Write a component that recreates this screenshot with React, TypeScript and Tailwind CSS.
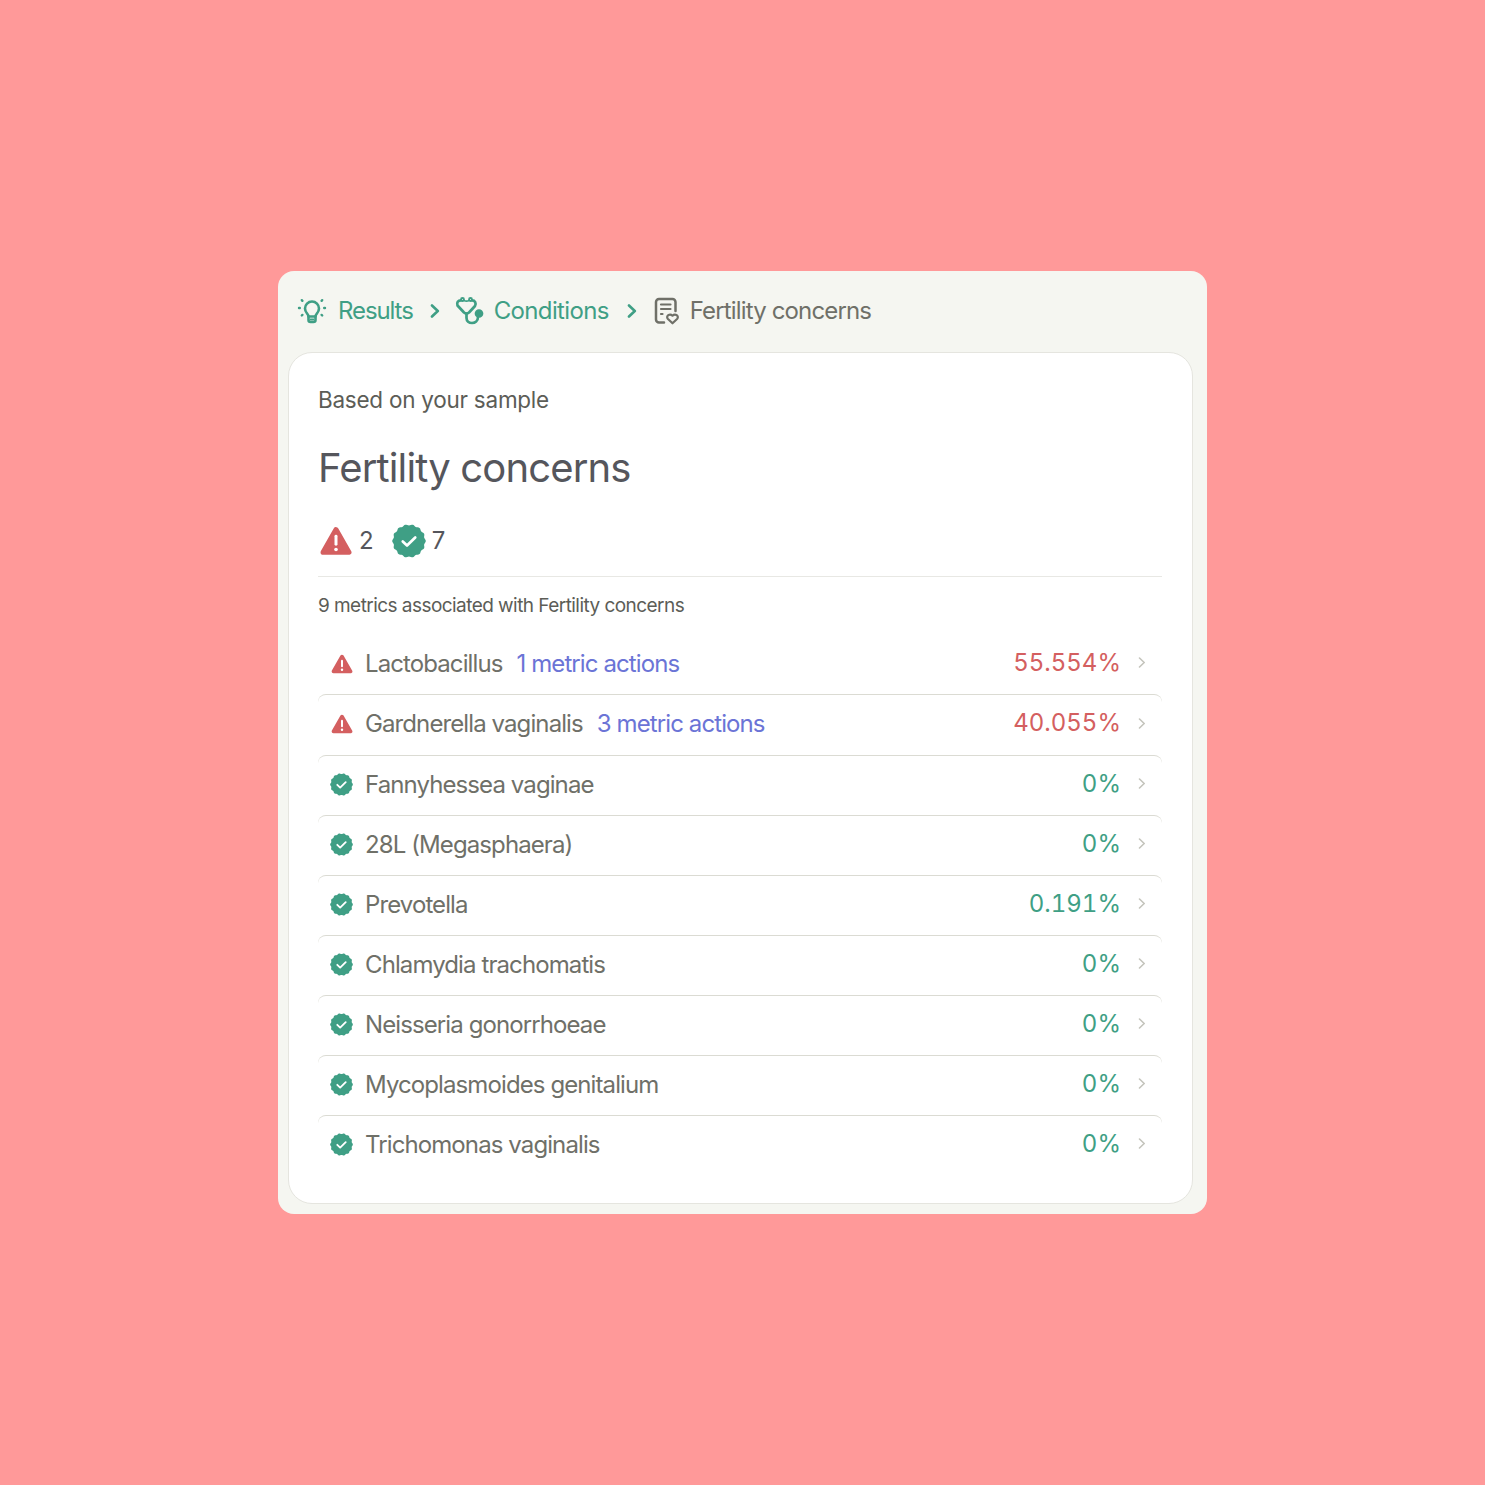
import React from "react";

const font = { fontFamily: 'Inter, "Liberation Sans", sans-serif' };

function scallopPath(cx: number, cy: number, r: number, n: number, amp: number) {
  const pts: string[] = [];
  const steps = n * 8;
  for (let i = 0; i < steps; i++) {
    const a = (i / steps) * Math.PI * 2;
    const rr = r + amp * Math.cos(a * n);
    pts.push(`${(cx + rr * Math.cos(a)).toFixed(2)} ${(cy + rr * Math.sin(a)).toFixed(2)}`);
  }
  return "M" + pts.join("L") + "Z";
}

function Check({ size }: { size: number }) {
  return (
    <svg width={size} height={size} viewBox="0 0 24 24" className="shrink-0">
      <path d={scallopPath(12, 12, 11.4, 14, 0.45)} fill="#3f9f85" />
      <path d="M7.6 12.3l3 2.9 5.8-5.7" fill="none" stroke="#fff" strokeWidth="1.9" strokeLinecap="round" strokeLinejoin="round" />
    </svg>
  );
}

function Warn({ w, h }: { w: number; h: number }) {
  return (
    <svg width={w} height={h} viewBox="0 0 30 28" className="shrink-0">
      <path d="M15 3.5L27 24.5H3L15 3.5Z" fill="#d45f60" stroke="#d45f60" strokeWidth="5" strokeLinejoin="round" />
      <path d="M15 9.5v7.5" stroke="#fff" strokeWidth="2.8" strokeLinecap="round" />
      <circle cx="15" cy="22" r="1.7" fill="#fff" />
    </svg>
  );
}

function BigChevron() {
  return (
    <svg width="10" height="14" viewBox="0 0 10 14" className="shrink-0">
      <path d="M2 1.5L7.8 7L2 12.5" fill="none" stroke="#3f9f85" strokeWidth="2.6" strokeLinecap="round" strokeLinejoin="round" />
    </svg>
  );
}

function SmallChevron() {
  return (
    <svg width="8" height="11" viewBox="0 0 8 11" className="shrink-0">
      <path d="M1.5 1L6.2 5.5L1.5 10" fill="none" stroke="#c4c4bc" strokeWidth="1.6" strokeLinecap="round" strokeLinejoin="round" />
    </svg>
  );
}

function Bulb() {
  return (
    <svg width="30" height="30" viewBox="0 0 30 30" fill="none" stroke="#3f9f85" strokeWidth="2.6" strokeLinecap="round" strokeLinejoin="round" className="shrink-0">
      <path d="M11.5 20.5c0-2.5-3.5-3.8-3.5-8a7 7 0 0 1 14 0c0 4.2-3.5 5.5-3.5 8z" />
      <path d="M11.5 20.5v3.5a2 2 0 0 0 2 2h3a2 2 0 0 0 2-2v-3.5" />
      <path d="M13.5 23.5h3" strokeWidth="1.8" />
      <path d="M4.8 4.2l.6.6M25.2 4.2l-.6.6M2 12h.8M27.2 12h.8M4.8 19.5l.6-.6M25.2 19.5l-.6-.6" strokeWidth="2.4" />
    </svg>
  );
}

function Steth() {
  return (
    <svg width="30" height="30" viewBox="0 0 30 30" fill="none" stroke="#3f9f85" strokeWidth="2.7" strokeLinecap="round" strokeLinejoin="round" className="shrink-0">
      <path d="M6 4.3C3 4.3 1.5 6.5 2.5 9.5L9 16.5c1.5 1.3 3.5 1.3 5 0l6-6.5c1.5-3 0-5.7-3-5.7" />
      <circle cx="7.5" cy="3.5" r="1.5" strokeWidth="1.8" />
      <circle cx="15.5" cy="3.5" r="1.5" strokeWidth="1.8" />
      <path d="M9 4.5c1.5.8 3.5.8 5 0" strokeWidth="1.8" />
      <path d="M11.5 17.5v4.5c0 3 2.5 5 5.5 5s6-2 6-6" />
      <circle cx="24" cy="17.5" r="3" fill="#3f9f85" />
    </svg>
  );
}

function Doc() {
  return (
    <svg width="26" height="28" viewBox="0 0 26 28" fill="none" stroke="#6f7068" strokeWidth="2.5" strokeLinecap="round" strokeLinejoin="round" className="shrink-0">
      <path d="M10 25.5H5a3 3 0 0 1-3-3V5a3 3 0 0 1 3-3h13.5a3 3 0 0 1 3 3v9" />
      <path d="M7 7.5h9.5M7 12h9.5M7 17h1.5" strokeWidth="2.2" />
      <path d="M18.5 26.3l-4.8-4.6c-2-2.7 2-5.7 4.8-3 2.8-2.7 6.8.3 4.800 3z" fill="#f5f6f1" strokeWidth="2.2" />
    </svg>
  );
}

type Row = { name: string; value: string; bad?: boolean; action?: string };
const rows: Row[] = [
  { name: "Lactobacillus", value: "55.554%", bad: true, action: "1 metric actions" },
  { name: "Gardnerella vaginalis", value: "40.055%", bad: true, action: "3 metric actions" },
  { name: "Fannyhessea vaginae", value: "0%" },
  { name: "28L (Megasphaera)", value: "0%" },
  { name: "Prevotella", value: "0.191%" },
  { name: "Chlamydia trachomatis", value: "0%" },
  { name: "Neisseria gonorrhoeae", value: "0%" },
  { name: "Mycoplasmoides genitalium", value: "0%" },
  { name: "Trichomonas vaginalis", value: "0%" },
];

export default function App() {
  return (
    <div className="flex h-[1485px] w-full items-center justify-center bg-[#ff9999]" style={font}>
      <div className="flex h-[943px] w-[929px] flex-col rounded-[16px] bg-[#f5f6f1] pb-[10px] pl-[10px] pr-[14px]">
        <div className="flex h-[81px] shrink-0 items-center pl-[9px] pb-[1px] text-[24px] tracking-[-0.85px] text-[#3f9f85]">
          <Bulb />
          <span className="ml-[11px] tracking-[-1.1px]">Results</span>
          <span className="ml-[17px] mr-[15px]"><BigChevron /></span>
          <Steth />
          <span className="ml-[9px] tracking-[-0.65px]">Conditions</span>
          <span className="ml-[18px] mr-[17px]"><BigChevron /></span>
          <Doc />
          <span className="ml-[10px] text-[#6f7068]">Fertility concerns</span>
        </div>
        <div className="flex flex-1 flex-col rounded-[24px] border border-[#e5e5df] bg-white pl-[29px] pr-[30px] pt-[32px]">
          <div className="text-[22.5px] leading-[30px] tracking-[-0.25px] text-[#5c5d57]">Based on your sample</div>
          <h1 className="mt-[28px] text-[40px] leading-[50px] tracking-[-0.85px] text-[#55565c]">Fertility concerns</h1>
          <div className="mt-[25px] flex h-[46px] items-center text-[24px] text-[#55565c]">
            <span className="ml-[2px]"><Warn w={32} h={30} /></span>
            <span className="ml-[7px]">2</span>
            <span className="ml-[18px]"><Check size={34} /></span>
            <span className="ml-[6px]">7</span>
          </div>
          <div className="mt-[12px] border-t border-[#e8e8e4]" />
          <div className="mt-[17px] text-[19px] leading-[24px] tracking-[-0.55px] text-[#5c5d57]">9 metrics associated with Fertility concerns</div>
          <div className="mt-[16px]">
            {rows.map((r, i) => (
              <div
                key={r.name}
                className={`flex items-center rounded-t-[8px] pl-[13px] pr-[16px] text-[24px] tracking-[-0.9px] ${i === 0 ? "h-[60px] pb-[1px]" : i === 1 ? "h-[61px] border-t border-[#dbdbd3] pb-[2px]" : "h-[60px] border-t border-[#dbdbd3] pb-[2px]"}`}
              >
                <span className="flex w-[21px] justify-center">
                  {r.bad ? <Warn w={22} h={20} /> : <Check size={23} />}
                </span>
                <span className="ml-[13px] text-[#6f7068]">{r.name}</span>
                {r.action && <span className="ml-[14px] tracking-[-0.9px] text-[#6b74d6]">{r.action}</span>}
                <span className={`ml-auto -translate-y-[1px] tabular-nums tracking-[0px] ${r.bad ? "text-[#d45f60]" : "text-[#3f9f85]"}`}>{r.value}</span>
                <span className="ml-[17px] -translate-y-[1px]"><SmallChevron /></span>
              </div>
            ))}
          </div>
        </div>
      </div>
    </div>
  );
}
